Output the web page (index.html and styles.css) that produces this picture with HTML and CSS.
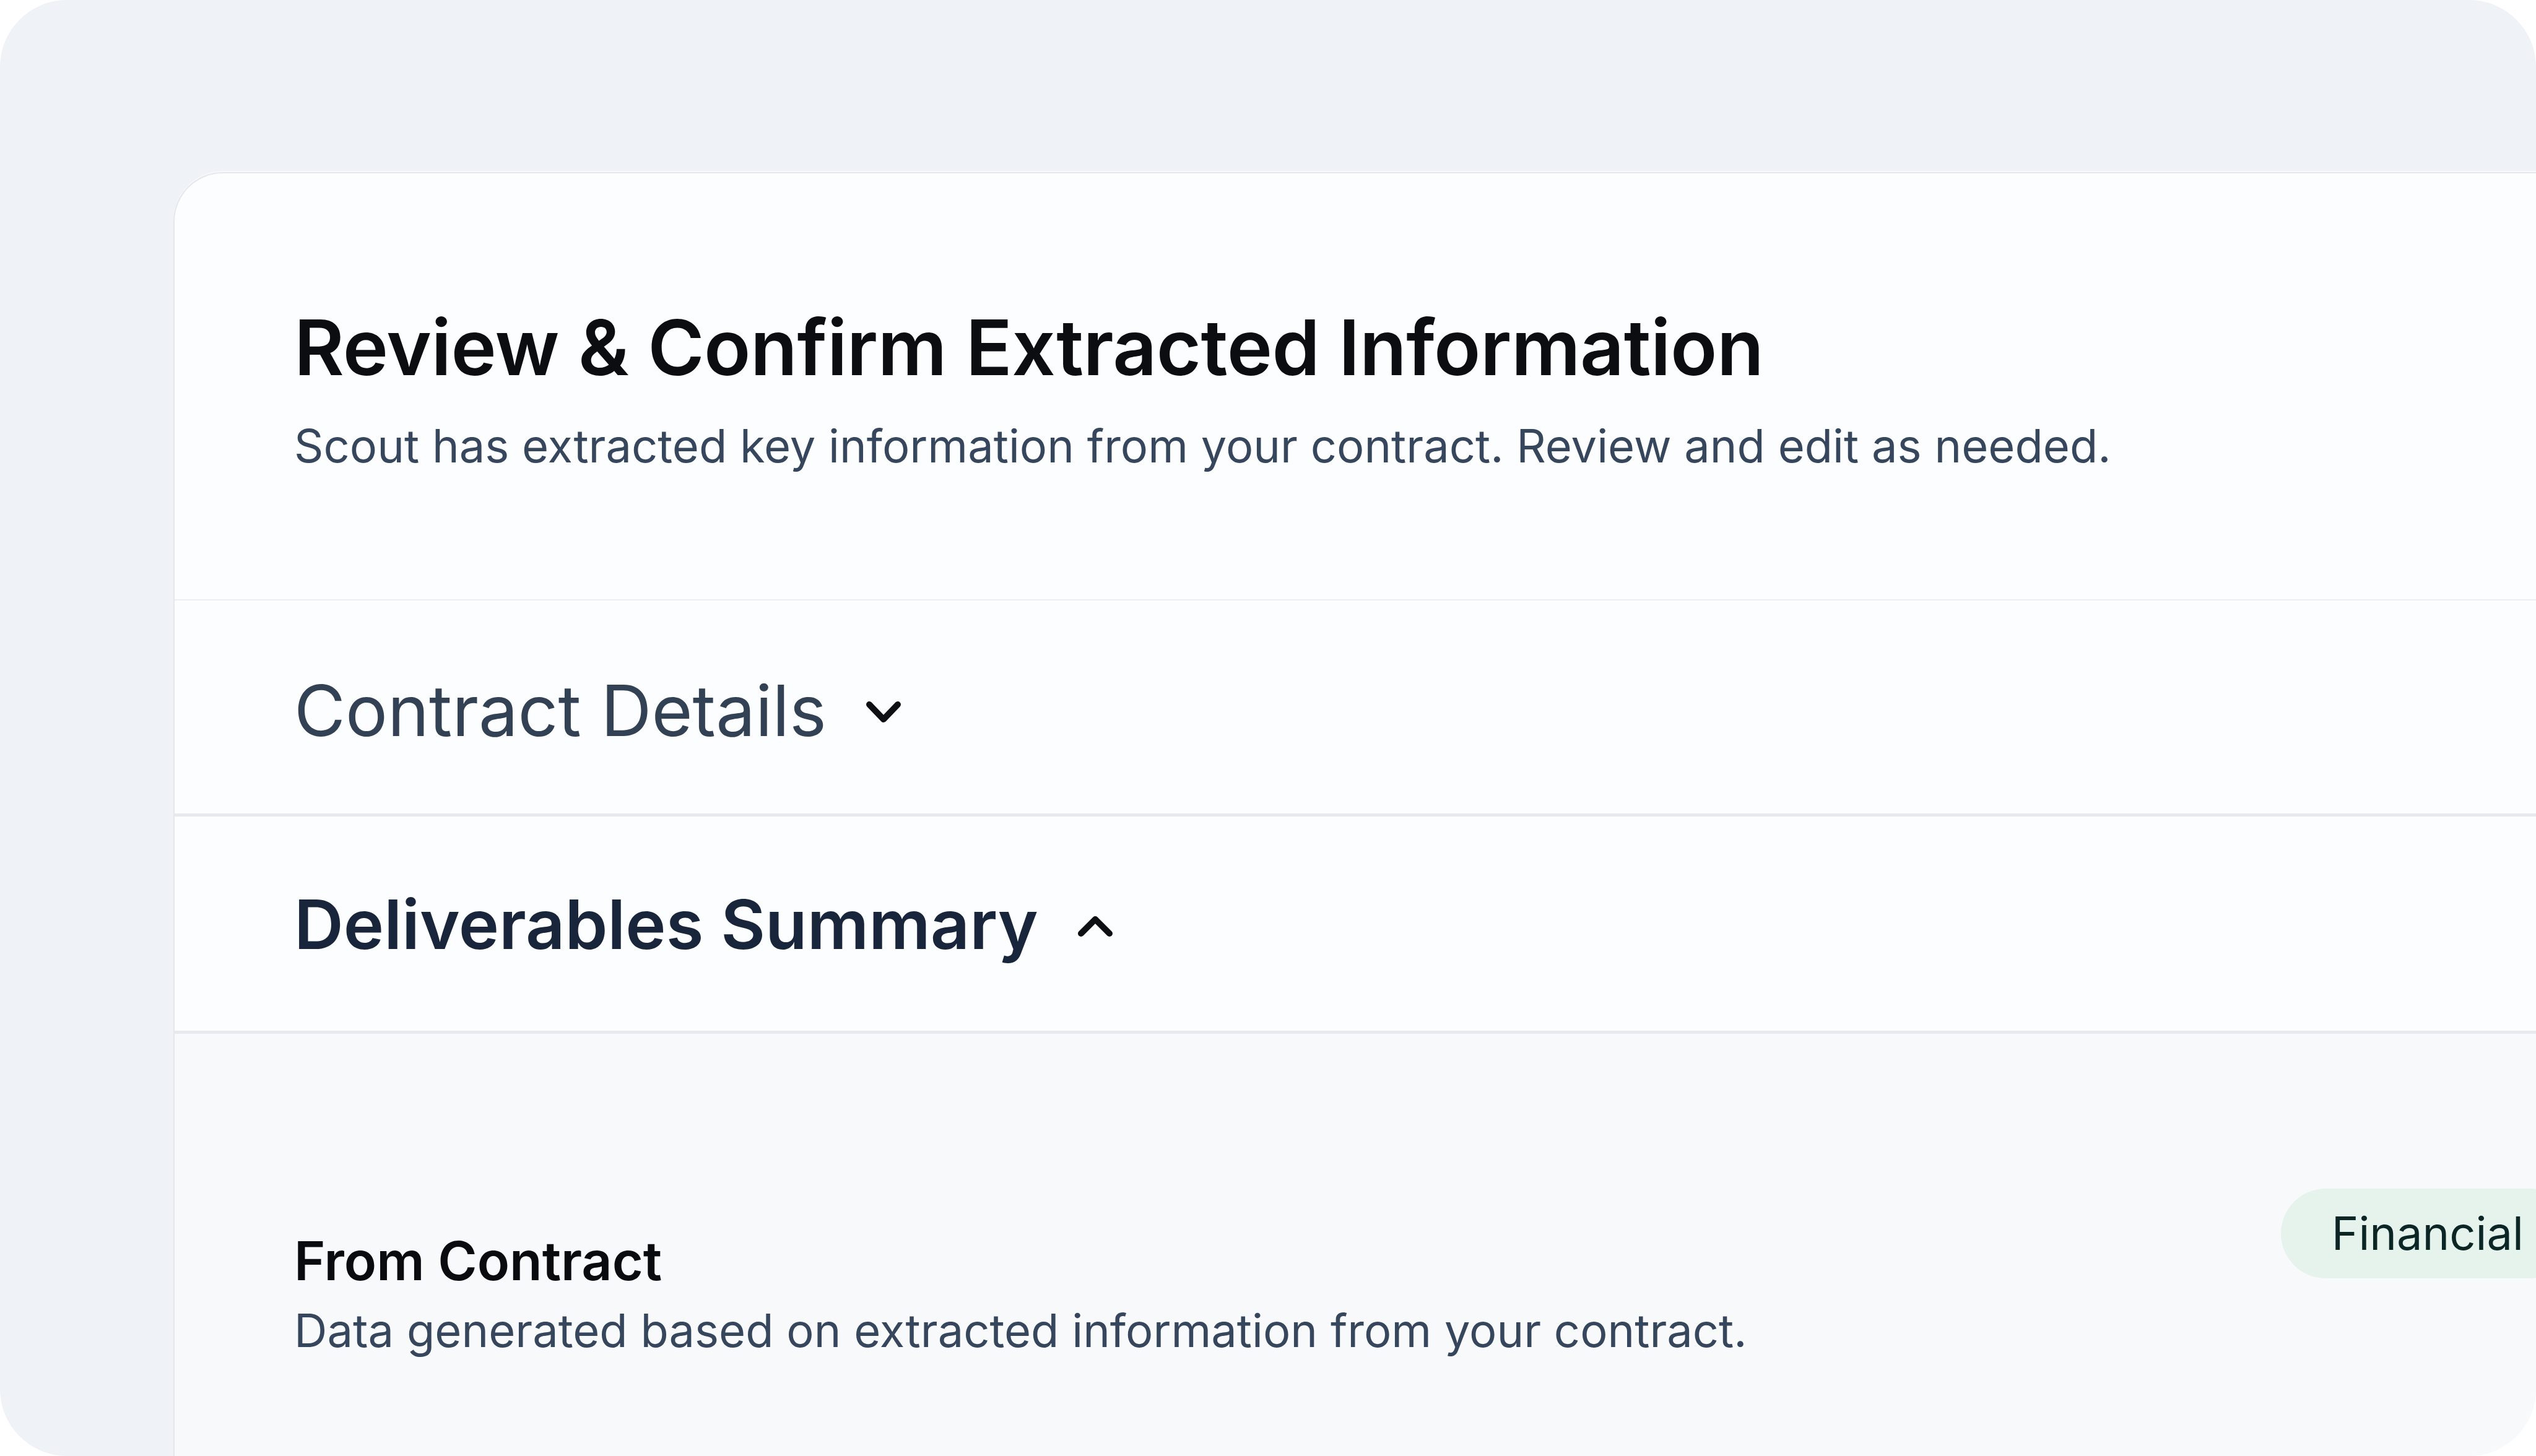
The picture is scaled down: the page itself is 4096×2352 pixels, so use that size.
FILE: index.html
```html
<!DOCTYPE html>
<html lang="en">
<head>
<meta charset="utf-8">
<title>Review &amp; Confirm Extracted Information</title>
<link rel="stylesheet" href="styles.css">
</head>
<body>
<div class="frame">
  <div class="card">
    <header class="card-header">
      <h1 class="title">Review &amp; Confirm Extracted Information</h1>
      <p class="subtitle">Scout has extracted key information from your contract. Review and edit as needed.</p>
    </header>
    <div class="section-row section-row--collapsed">
      <h2 class="section-title section-title--light">Contract Details</h2>
      <svg class="chevron" width="60" height="40" viewBox="0 0 60 40" aria-hidden="true"><path d="M7 7 L30 31 L53 7" /></svg>
    </div>
    <div class="section-row section-row--open">
      <h2 class="section-title section-title--strong">Deliverables Summary</h2>
      <svg class="chevron" width="60" height="40" viewBox="0 0 60 40" aria-hidden="true"><path d="M7 31 L30 8 L53 31" /></svg>
    </div>
    <div class="section-body">
      <div class="source-row">
        <div class="source-text">
          <h3 class="source-title">From Contract</h3>
          <p class="source-desc">Data generated based on extracted information from your contract.</p>
        </div>
        <span class="badge">Financial</span>
      </div>
    </div>
  </div>
</div>
</body>
</html>
```
FILE: styles.css
```css
* { box-sizing: border-box; }
html, body { margin: 0; padding: 0; }
body {
  background: #ffffff;
  font-family: Inter, "Noto Sans", "Liberation Sans", sans-serif;
  width: 4096px;
  height: 2352px;
  overflow: hidden;
}
.frame {
  width: 4096px;
  height: 2352px;
  border-radius: 108px;
  background: #eff2f6;
  overflow: hidden;
  padding: 278px 0 0 280px;
}
.card {
  width: 4070px;
  min-height: 2200px;
  background: #fcfdfe;
  border: 2px solid #e4e7ec;
  border-right: none;
  border-top-left-radius: 80px;
  box-shadow: 0 -2px 0 0 #f7f8fa;
  overflow: hidden;
}
.card-header {
  padding: 207px 192px 192px 193px;
  border-bottom: 2px solid #eceef2;
}
.title {
  margin: 0;
  font-size: 124px;
  line-height: 1.2;
  font-weight: 600;
  color: #0b0d11;
  letter-spacing: -0.5px;
}
.subtitle {
  margin: 29px 0 0;
  font-size: 74px;
  line-height: 1.5;
  font-weight: 400;
  color: #36465c;
}
.section-row {
  display: flex;
  align-items: center;
  gap: 62px;
  border-bottom: 5px solid #e6eaf0;
  background: #fcfdfe;
}
.section-row--collapsed {
  padding: 93px 193px 81px;
}
.section-row--open {
  padding: 92px 193px 88px;
}
.section-title {
  margin: 0;
  line-height: 1.5;
}
.section-title--light {
  font-size: 113.5px;
  font-weight: 400;
  color: #334155;
}
.section-title--strong {
  font-size: 110.5px;
  font-weight: 600;
  color: #18253a;
}
.chevron {
  flex: none;
  margin-top: 6px;
}
.chevron path {
  fill: none;
  stroke: #0d0f12;
  stroke-width: 10;
  stroke-linecap: round;
  stroke-linejoin: round;
}
.section-body {
  background: #f8f9fb;
  padding: 250px 192px 200px 193px;
  min-height: 700px;
}
.source-row {
  display: flex;
  justify-content: space-between;
  align-items: flex-start;
}
.source-text {
  margin-top: 62px;
}
.source-title {
  margin: 0;
  font-size: 86px;
  line-height: 1.3;
  font-weight: 600;
  color: #090b0e;
}
.source-desc {
  margin: 0;
  font-size: 74px;
  line-height: 1.5;
  font-weight: 400;
  color: #36465c;
}
.badge {
  flex: none;
  display: inline-block;
  background: #e5f3ec;
  color: #0c2626;
  font-size: 74px;
  line-height: 1.5;
  padding: 17px 82px;
  border-radius: 999px;
}
```
